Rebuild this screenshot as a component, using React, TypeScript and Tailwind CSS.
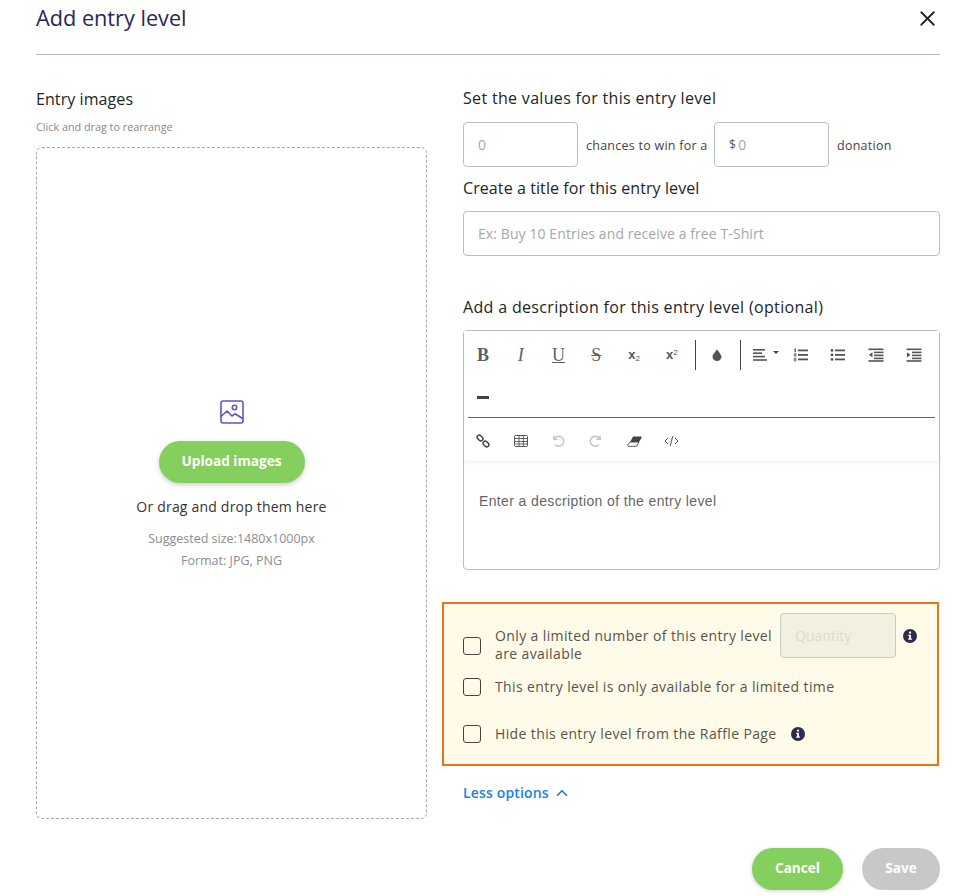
import { ChevronUp, X } from "lucide-react";
import type { ReactNode } from "react";

const font = "font-['Open_Sans','Noto_Sans',sans-serif]";

function InfoIcon() {
  return (
    <svg width="14" height="14" viewBox="0 0 14 14" className="shrink-0">
      <circle cx="7" cy="7" r="7" fill="#2e2c4d" />
      <rect x="5.9" y="2.6" width="2.2" height="2" rx="0.6" fill="#fff" />
      <path d="M5.2 5.8H8v3.7h.9v1.2H5.2V9.5h.9V7H5.2z" fill="#fff" />
    </svg>
  );
}

function ToolBtn({ children, className = "" }: { children: ReactNode; className?: string }) {
  return <div className={`flex h-5 w-[37.8px] shrink-0 items-center justify-center text-[#555] ${className}`}>{children}</div>;
}

function Lines({ kind }: { kind: "left" | "ol" | "ul" | "out" | "in" }) {
  return (
    <svg width="16" height="14" viewBox="0 0 16 14" fill="#555" className="shrink-0">
      {kind === "left" && (
        <>
          <rect x="1" y="1" width="12" height="1.6" />
          <rect x="1" y="4.4" width="9" height="1.6" />
          <rect x="1" y="7.8" width="12" height="1.6" />
          <rect x="1" y="11.2" width="14" height="1.6" />
        </>
      )}
      {(kind === "ol" || kind === "ul") && (
        <>
          <rect x="5" y="1.5" width="10" height="1.8" />
          <rect x="5" y="6" width="10" height="1.8" />
          <rect x="5" y="10.5" width="10" height="1.8" />
        </>
      )}
      {kind === "ol" && (
        <>
          <rect x="1.5" y="0.5" width="1.4" height="3.6" />
          <rect x="0.8" y="5.2" width="2.6" height="3.4" opacity="0.7" />
          <rect x="0.8" y="9.8" width="2.6" height="3.6" opacity="0.7" />
        </>
      )}
      {kind === "ul" && (
        <>
          <circle cx="2" cy="2.4" r="1.4" />
          <circle cx="2" cy="6.9" r="1.4" />
          <circle cx="2" cy="11.4" r="1.4" />
        </>
      )}
      {(kind === "out" || kind === "in") && (
        <>
          <rect x="0.5" y="0.5" width="15" height="1.6" />
          <rect x="6" y="3.6" width="9.5" height="1.6" />
          <rect x="6" y="6.6" width="9.5" height="1.6" />
          <rect x="6" y="9.6" width="9.5" height="1.6" />
          <rect x="0.5" y="12.2" width="15" height="1.6" />
        </>
      )}
      {kind === "out" && <path d="M4.5 4.2v5.2L1 6.8z" />}
      {kind === "in" && <path d="M1 4.2v5.2l3.5-2.6z" />}
    </svg>
  );
}

function Toolbar() {
  const serif = "font-['Liberation_Serif',serif] text-[18px] leading-none text-[#5f5f5f]";
  return (
    <div className="bg-white shadow-[0_2px_4px_rgba(0,0,0,0.06)]">
      <div className="flex h-[50px] items-center pb-[3px]">
        <ToolBtn><span className={`${serif} font-bold`}>B</span></ToolBtn>
        <ToolBtn><span className={`${serif} italic`}>I</span></ToolBtn>
        <ToolBtn><span className={`${serif} underline`}>U</span></ToolBtn>
        <ToolBtn><span className={`${serif} line-through`}>S</span></ToolBtn>
        <ToolBtn><span className="font-['Liberation_Sans',sans-serif] text-[13px] font-bold">x<sub className="text-[8px] font-normal">2</sub></span></ToolBtn>
        <ToolBtn><span className="font-['Liberation_Sans',sans-serif] text-[13px] font-bold">x<sup className="text-[8px] font-normal">2</sup></span></ToolBtn>
        <div className="mx-[4px] h-[30px] w-px shrink-0 bg-[#444]" />
        <ToolBtn className="!w-[35px]">
          <svg width="10" height="12" viewBox="0 0 10 12" fill="#555">
            <path d="M5 0C5.5 2 9.5 5 9.5 7.8A4.5 4.2 0 0 1 .5 7.8C.5 5 4.5 2 5 0z" />
          </svg>
        </ToolBtn>
        <div className="ml-[5px] mr-[3px] h-[30px] w-px shrink-0 bg-[#444]" />
        <div className="flex h-5 w-[38px] shrink-0 items-center gap-[5px] pl-[8px]">
          <Lines kind="left" />
          <span className="mb-1 h-0 w-0 border-x-[3px] border-t-[3px] border-x-transparent border-t-[#444]" />
        </div>
        <ToolBtn><Lines kind="ol" /></ToolBtn>
        <ToolBtn><Lines kind="ul" /></ToolBtn>
        <ToolBtn><Lines kind="out" /></ToolBtn>
        <ToolBtn><Lines kind="in" /></ToolBtn>
      </div>
      <div className="flex h-[36px] items-center pb-[4px]">
        <ToolBtn><div className="h-[3px] w-[12px] bg-[#444]" /></ToolBtn>
      </div>
      <div className="mx-1 border-t border-[#666]" />
      <div className="flex h-[43px] items-center pt-[3px]">
        <ToolBtn>
          <svg width="14" height="14" viewBox="0 0 14 14" fill="none" stroke="#444" strokeWidth="1.5">
            <rect x="-3.2" y="-2.1" width="6.4" height="4.2" rx="2.1" transform="translate(4 4) rotate(45)" />
            <rect x="-3.2" y="-2.1" width="6.4" height="4.2" rx="2.1" transform="translate(10 10) rotate(45)" />
          </svg>
        </ToolBtn>
        <ToolBtn>
          <svg width="14" height="12" viewBox="0 0 14 12" fill="none" stroke="#555">
            <rect x="0.5" y="0.5" width="13" height="11" rx="1" />
            <path d="M0.5 3.5h13M0.5 6.5h13M0.5 9h13M5 0.5v11M9.3 0.5v11" strokeWidth="0.9" />
          </svg>
        </ToolBtn>
        <ToolBtn>
          <svg width="14" height="14" viewBox="0 0 24 24" fill="none" stroke="#c4c4c4" strokeWidth="2.6" strokeLinecap="round">
            <path d="M5 4v5h5" /><path d="M5.5 9A8.5 8.5 0 1 1 8 19" />
          </svg>
        </ToolBtn>
        <ToolBtn>
          <svg width="14" height="14" viewBox="0 0 24 24" fill="none" stroke="#c4c4c4" strokeWidth="2.6" strokeLinecap="round">
            <path d="M19 4v5h-5" /><path d="M18.5 9A8.5 8.5 0 1 0 16 19" />
          </svg>
        </ToolBtn>
        <ToolBtn>
          <svg width="15" height="11" viewBox="0 0 15 11">
            <path d="M6 0.5h7.5a1 1 0 0 1 1 1.4L12 6H3.2z" fill="#444" />
            <path d="M3.2 6H12l-2.4 4.3H1.2a.8.8 0 0 1-.7-1.2z" fill="#fff" stroke="#444" strokeWidth="0.9" />
          </svg>
        </ToolBtn>
        <ToolBtn>
          <svg width="15" height="12" viewBox="0 0 15 12" fill="none" stroke="#555" strokeWidth="1">
            <path d="M4 3 1 6l3 3M11 3l3 3-3 3M8.8 1 6.2 11" />
          </svg>
        </ToolBtn>
      </div>
    </div>
  );
}

function Checkbox() {
  return <span className="block h-[18px] w-[18px] shrink-0 rounded-[3px] border border-[#44443c]" />;
}

export default function App() {
  return (
    <div className={`${font} flex h-[896px] w-[966px] flex-col overflow-hidden bg-white pl-[36px] pr-[26px] text-[#212529]`}>
      <div className="flex h-[55px] items-start justify-between border-b border-[#b4b8bd] pt-[3px]">
        <h1 className="text-[21.7px] leading-[30px] text-[#2a2856]">Add entry level</h1>
        <X size={25} strokeWidth={1.7} className="mt-[3px] text-[#222]" />
      </div>

      <div className="mt-[33px] flex gap-[36px]">
        <div className="flex w-[391px] flex-col">
          <div className="text-[16px] leading-[22px] tracking-[0.08px]">Entry images</div>
          <div className="mt-[10px] text-[10.8px] leading-[14px] text-[#868a8f]">Click and drag to rearrange</div>
          <div className="mt-[13px] flex h-[672px] flex-col items-center rounded-[6px] border border-dashed border-[#a8a8a8] pt-[252px]">
            <svg width="24" height="24" viewBox="0 0 24 24" fill="none" stroke="#5c56c4" strokeWidth="1.6" strokeLinejoin="round">
              <rect x="1" y="1" width="22" height="22" rx="2" />
              <circle cx="14.5" cy="7.5" r="2.2" />
              <path d="M1 16.5 7 11l5 5 3-2.2 8 5" />
            </svg>
            <button className="mt-[17px] h-[42px] w-[146px] rounded-full bg-[#84cf5d] pb-[2px] text-[13.6px] font-bold text-white shadow-[0_2px_5px_rgba(0,0,0,0.2)]">
              Upload images
            </button>
            <div className="mt-[14px] text-[14px] leading-[20px] tracking-[0.2px] text-[#333]">Or drag and drop them here</div>
            <div className="mt-[11px] text-[12.5px] leading-[22px] text-[#8b8e92]">Suggested size:1480x1000px</div>
            <div className="text-[12.5px] leading-[22px] text-[#8b8e92]">Format: JPG, PNG</div>
          </div>
        </div>

        <div className="-mt-px flex w-[477px] flex-col">
          <div className="text-[16px] leading-[22px] tracking-[0.32px]">Set the values for this entry level</div>
          <div className="mt-[13px] flex items-center text-[12.5px] tracking-[0.25px] text-[#444]">
            <div className="flex h-[45px] w-[115px] items-center rounded-[4px] border border-[#b9bfc6] pl-[14px] text-[14px] text-[#a4a7ab]">0</div>
            <span className="ml-[8px] mt-[4px] w-[128px]">chances to win for a</span>
            <div className="flex h-[45px] w-[115px] items-center rounded-[4px] border border-[#b9bfc6] pl-[14px] text-[14px] text-[#a4a7ab]">
              <span className="mr-[2px] text-[12px] text-[#555]">$</span>0
            </div>
            <span className="ml-[8px] mt-[4px]">donation</span>
          </div>
          <div className="mt-[10px] text-[16px] leading-[22px] tracking-[0.09px]">Create a title for this entry level</div>
          <div className="mt-[12px] flex h-[45px] items-center rounded-[4px] border border-[#b9bfc6] pl-[14px] text-[14px] tracking-[0.09px] text-[#a4a7ab]">
            Ex: Buy 10 Entries and receive a free T-Shirt
          </div>
          <div className="mt-[40px] text-[16px] leading-[22px] tracking-[0.33px]">Add a description for this entry level (optional)</div>
          <div className="mt-[12px] h-[240px] rounded-[4px] border border-[#b9bfc6]">
            <Toolbar />
            <div className="pl-[15px] pt-[31px] font-['Liberation_Sans',sans-serif] text-[14px] leading-[18px] tracking-[0.37px] text-[#666]">
              Enter a description of the entry level
            </div>
          </div>

          <div className="-ml-[21px] mt-[32px] h-[164px] w-[497px] border-2 border-[#f0720f] bg-[#fffbe8] pl-[19px] text-[14px] leading-[18px] tracking-[0.38px] text-[#55554e]">
            <div className="flex h-[63px] pt-[9px]">
              <div className="mt-[24px] shrink-0"><Checkbox /></div>
              <div className="ml-[14px] mt-[14px] w-[285px]">Only a limited number of this entry level are available</div>
              <div className="flex h-[45px] w-[116px] shrink-0 items-center rounded-[4px] border border-[#c2d0c4] bg-[#f2f1e0] pl-[14px] tracking-normal text-[#dcdccb]">
                Quantity
              </div>
              <div className="ml-[7px] mt-[16px]"><InfoIcon /></div>
            </div>
            <div className="mt-[11px] flex items-center">
              <Checkbox />
              <span className="ml-[14px]">This entry level is only available for a limited time</span>
            </div>
            <div className="mt-[29px] flex items-center">
              <Checkbox />
              <span className="ml-[14px]">Hide this entry level from the Raffle Page</span>
              <span className="ml-[14px]"><InfoIcon /></span>
            </div>
          </div>

          <div className="mt-[17px] flex items-center gap-[4px] text-[14px] font-semibold leading-[20px] tracking-[0.15px] text-[#1a82e2]">
            Less options <ChevronUp size={18} strokeWidth={2.3} />
          </div>

          <div className="mt-[45px] flex justify-end gap-[19px] text-[13.6px] font-bold text-white">
            <button className="h-[42px] w-[91px] rounded-full bg-[#84cf5d] pb-[1px] shadow-[0_1px_4px_rgba(0,0,0,0.2)]">Cancel</button>
            <button className="h-[42px] w-[78px] rounded-full bg-[#c8c8c8] pb-[1px]">Save</button>
          </div>
        </div>
      </div>
    </div>
  );
}
